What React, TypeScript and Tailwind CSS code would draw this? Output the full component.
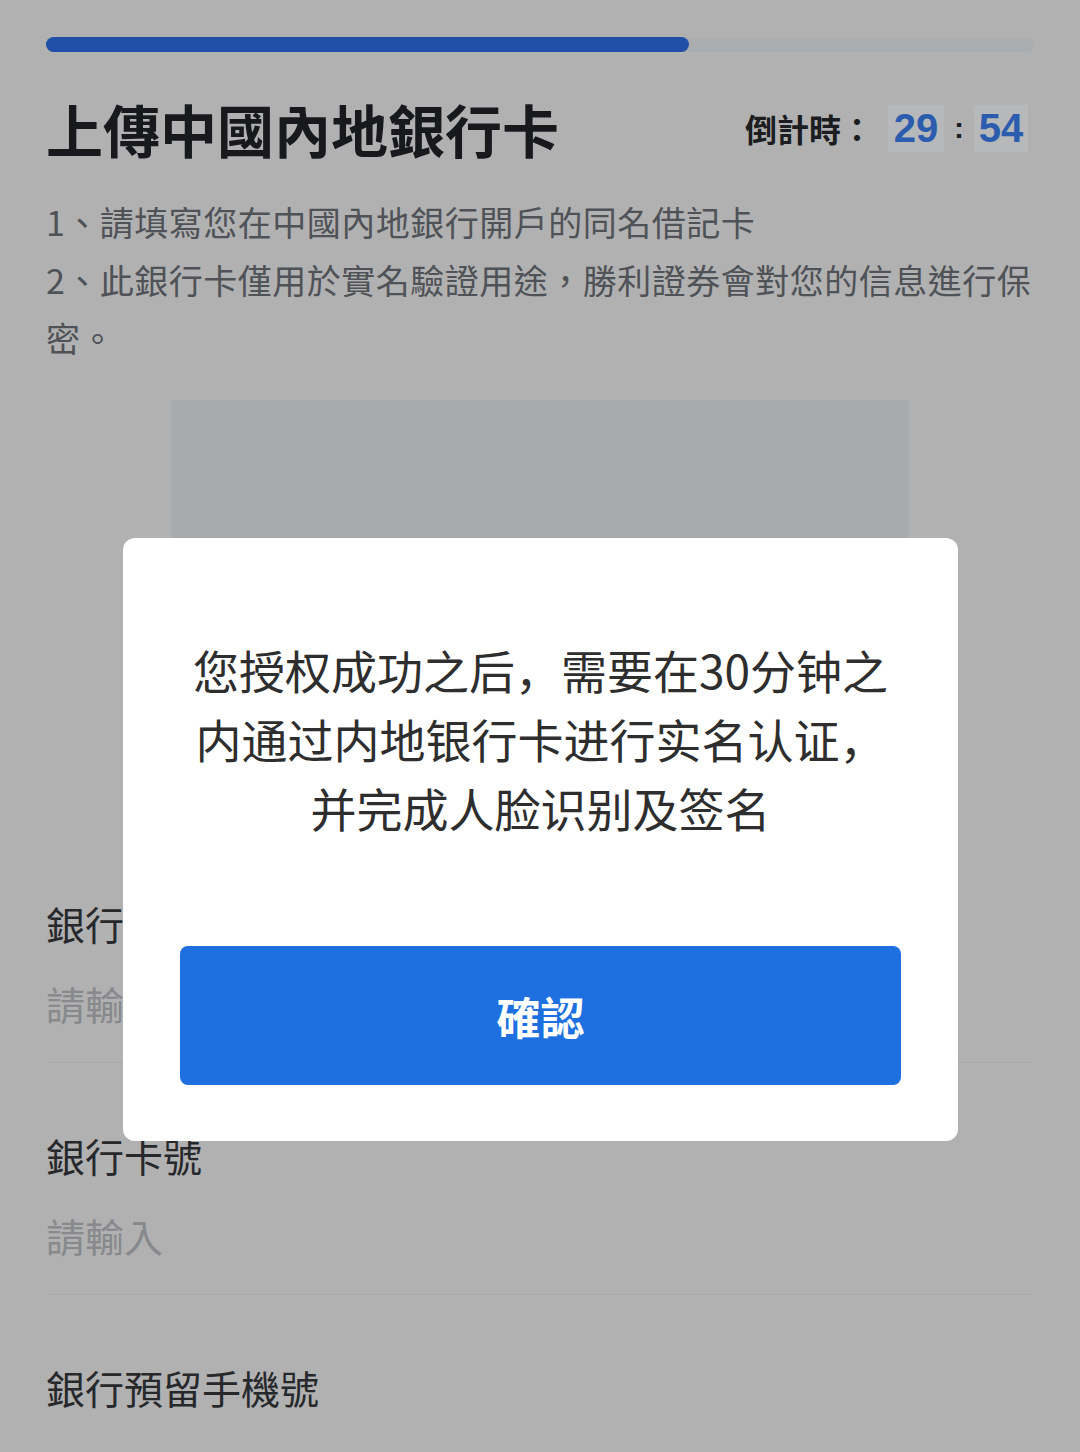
import React from "react";

const tcFont = { fontFamily: '"Noto Sans CJK TC", "Noto Sans CJK SC", sans-serif' };
const scFont = { fontFamily: '"Noto Sans CJK SC", "Noto Sans CJK TC", sans-serif' };
const numFont = { fontFamily: '"Liberation Sans", Arial, sans-serif' };

function Countdown() {
  return (
    <div className="flex items-center">
      <span className="text-[32px] font-bold leading-none text-[#1b1d20]">倒計時：</span>
      <span
        className="ml-[15px] flex h-[47px] w-[56px] items-center justify-center bg-[#b6b8ba] text-[40px] font-bold leading-none text-[#2b5cad]"
        style={numFont}
      >
        29
      </span>
      <span className="mx-[10px] text-[30px] font-bold leading-none text-[#1b1d20]" style={numFont}>
        :
      </span>
      <span
        className="flex h-[47px] w-[54px] items-center justify-center bg-[#b6b8ba] text-[40px] font-bold leading-none text-[#2b5cad]"
        style={numFont}
      >
        54
      </span>
    </div>
  );
}

function FieldRow({ label, last }: { label: string; last?: boolean }) {
  return (
    <div className={last ? "pt-[68px]" : "border-b border-[#a9a9a9] pt-[68px] pb-[35px]"}>
      <div className="text-[39px] leading-[48px] text-[#26282b]">{label}</div>
      {!last && <div className="mt-[32px] text-[39px] leading-[48px] text-[#87898d]">請輸入</div>}
    </div>
  );
}

function AuthModal() {
  return (
    <div className="absolute inset-0">
      <div
        className="absolute left-[123px] top-[538px] flex w-[835px] flex-col rounded-[12px] bg-white px-[57px] pt-[97px] pb-[56px]"
        style={scFont}
      >
        <p className="text-center text-[46px] leading-[69px] text-[#2e2e2e]">
          您授权成功之后，需要在30分钟之
          <br />
          内通过内地银行卡进行实名认证，
          <br />
          并完成人脸识别及签名
        </p>
        <button className="mt-[104px] h-[139px] w-full rounded-[8px] bg-[#1e6fe0] text-[44px] font-bold text-white">
          確認
        </button>
      </div>
    </div>
  );
}

export default function App() {
  return (
    <div className="relative h-[1452px] w-[1080px] overflow-hidden bg-[#b1b1b1]" style={tcFont}>
      <div className="px-[46px] pt-[37px]">
        <div className="h-[15px] w-full rounded-full bg-[#abaeb0]">
          <div className="h-full w-[643px] rounded-full bg-[#1f4fa6]" />
        </div>

        <div className="mt-[42px] flex h-[68px] items-center justify-between pr-[6px]">
          <h1 className="text-[57px] font-bold leading-[68px] text-[#17191c]">上傳中國內地銀行卡</h1>
          <Countdown />
        </div>

        <div className="mt-[31px] text-[34px] leading-[58px] tracking-[0.5px] text-[#4f5257]">
          <p>1、請填寫您在中國內地銀行開戶的同名借記卡</p>
          <p>2、此銀行卡僅用於實名驗證用途，勝利證券會對您的信息進行保密。</p>
        </div>

        <div className="mx-auto mt-[33px] h-[431px] w-[738px] rounded-[4px] bg-[#a8abad]" />

        <FieldRow label="銀行名稱" />
        <FieldRow label="銀行卡號" />
        <FieldRow label="銀行預留手機號" last />
      </div>

      <AuthModal />
    </div>
  );
}
